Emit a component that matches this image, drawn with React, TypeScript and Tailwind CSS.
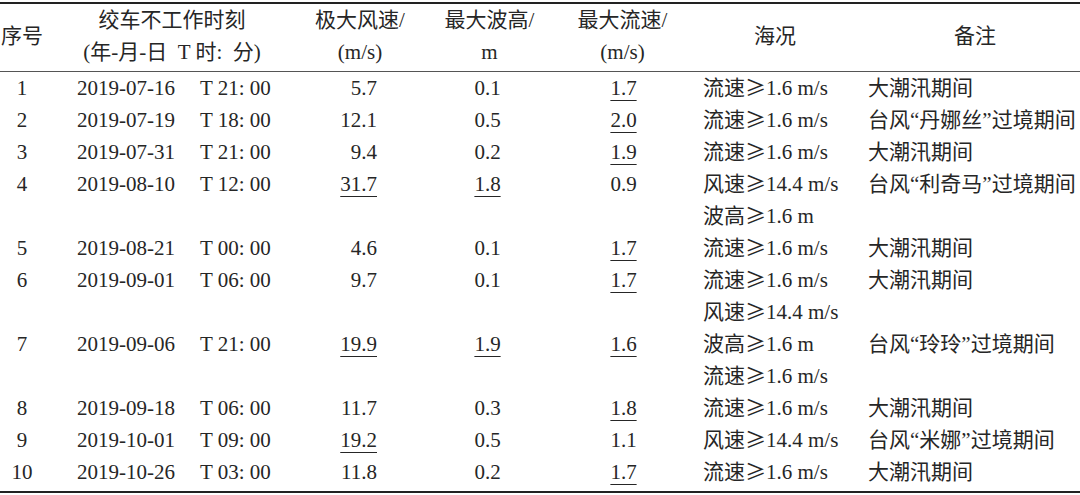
import React from "react";

type Row = {
  no: string;
  date: string;
  time: string;
  wind: string;
  windU?: boolean;
  wave: string;
  waveU?: boolean;
  flow: string;
  flowU?: boolean;
  sea: string[][];
  note: string;
  align?: "top" | "center";
};

const FLOW = ["流速", "1.6 m/s"];
const WIND = ["风速", "14.4 m/s"];
const WAVE = ["波高", "1.6 m"];

const rows: Row[] = [
  { no: "1", date: "2019-07-16", time: "T 21: 00", wind: "5.7", wave: "0.1", flow: "1.7", flowU: true, sea: [FLOW], note: "大潮汛期间" },
  { no: "2", date: "2019-07-19", time: "T 18: 00", wind: "12.1", wave: "0.5", flow: "2.0", flowU: true, sea: [FLOW], note: "台风“丹娜丝”过境期间" },
  { no: "3", date: "2019-07-31", time: "T 21: 00", wind: "9.4", wave: "0.2", flow: "1.9", flowU: true, sea: [FLOW], note: "大潮汛期间" },
  { no: "4", date: "2019-08-10", time: "T 12: 00", wind: "31.7", windU: true, wave: "1.8", waveU: true, flow: "0.9", sea: [WIND, WAVE], note: "台风“利奇马”过境期间", align: "top" },
  { no: "5", date: "2019-08-21", time: "T 00: 00", wind: "4.6", wave: "0.1", flow: "1.7", flowU: true, sea: [FLOW], note: "大潮汛期间" },
  { no: "6", date: "2019-09-01", time: "T 06: 00", wind: "9.7", wave: "0.1", flow: "1.7", flowU: true, sea: [FLOW], note: "大潮汛期间" },
  { no: "7", date: "2019-09-06", time: "T 21: 00", wind: "19.9", windU: true, wave: "1.9", waveU: true, flow: "1.6", flowU: true, sea: [WIND, WAVE, FLOW], note: "台风“玲玲”过境期间", align: "center" },
  { no: "8", date: "2019-09-18", time: "T 06: 00", wind: "11.7", wave: "0.3", flow: "1.8", flowU: true, sea: [FLOW], note: "大潮汛期间" },
  { no: "9", date: "2019-10-01", time: "T 09: 00", wind: "19.2", windU: true, wave: "0.5", flow: "1.1", sea: [WIND], note: "台风“米娜”过境期间" },
  { no: "10", date: "2019-10-26", time: "T 03: 00", wind: "11.8", wave: "0.2", flow: "1.7", flowU: true, sea: [FLOW], note: "大潮汛期间" },
];

const serif = "font-['Liberation_Serif','Noto_Sans_CJK_SC',serif]";
const cjk = "font-['Noto_Sans_CJK_SC','Liberation_Serif',sans-serif]";
const cols = "grid grid-cols-[44px_256px_120px_135px_135px_170px_220px]";

function Num({ v, u }: { v: string; u?: boolean }) {
  return <span className={u ? "underline decoration-1 underline-offset-[5px]" : ""}>{v}</span>;
}

function Line({ children, className = "" }: { children: React.ReactNode; className?: string }) {
  return <div className={`h-[32px] leading-[32px] whitespace-nowrap ${className}`}>{children}</div>;
}

function DataRow({ r }: { r: Row }) {
  const al = r.align === "center" ? "items-center" : "items-start";
  const h = r.sea.length === 3 ? "h-[96px]" : r.sea.length === 2 ? "h-[64px]" : "h-[32px]";
  return (
    <div className={`${cols} ${h}`}>
      <div className={`flex justify-center ${al}`}>
        <Line>{r.no}</Line>
      </div>
      <div className={`flex gap-[25px] pl-[33px] ${al}`}>
        <Line>{r.date}</Line>
        <Line className="whitespace-pre">{r.time}</Line>
      </div>
      <div className={`flex justify-end pr-[43px] ${al}`}>
        <Line>
          <Num v={r.wind} u={r.windU} />
        </Line>
      </div>
      <div className={`flex justify-center ${al}`}>
        <Line>
          <Num v={r.wave} u={r.waveU} />
        </Line>
      </div>
      <div className={`flex justify-center pl-[2px] ${al}`}>
        <Line>
          <Num v={r.flow} u={r.flowU} />
        </Line>
      </div>
      <div className="flex flex-col pl-[13px]">
        {r.sea.map((s, i) => (
          <Line key={i} className="whitespace-pre">
            {s[0]}
            <span className={`${cjk} leading-[0]`}>≥</span>
            {s[1]}
          </Line>
        ))}
      </div>
      <div className={`flex pl-[8px] ${al}`}>
        <Line>{r.note}</Line>
      </div>
    </div>
  );
}

export default function App() {
  return (
    <div className={`w-[1080px] h-[495px] overflow-hidden bg-white pt-[2px] text-[21px] text-[#262626] ${serif}`}>
      <div className="border-t-2 border-[#222]">
        <div className={`${cols} pb-[3px] border-b border-[#555]`}>
          <div className="flex items-center justify-center">
            <Line>序号</Line>
          </div>
          <div className="flex flex-col items-center">
            <Line>绞车不工作时刻</Line>
            <Line className="whitespace-pre">(年-月-日  T 时:  分)</Line>
          </div>
          <div className="flex flex-col items-center">
            <Line>极大风速/</Line>
            <Line>(m/s)</Line>
          </div>
          <div className="flex flex-col items-center pl-[4px]">
            <Line>最大波高/</Line>
            <Line>m</Line>
          </div>
          <div className="flex flex-col items-center">
            <Line>最大流速/</Line>
            <Line>(m/s)</Line>
          </div>
          <div className="flex items-center justify-center">
            <Line>海况</Line>
          </div>
          <div className="flex items-center justify-center pl-[10px]">
            <Line>备注</Line>
          </div>
        </div>
        <div className="pb-[3px] border-b-2 border-[#222]">
          {rows.map((r) => (
            <DataRow key={r.no} r={r} />
          ))}
        </div>
      </div>
    </div>
  );
}
